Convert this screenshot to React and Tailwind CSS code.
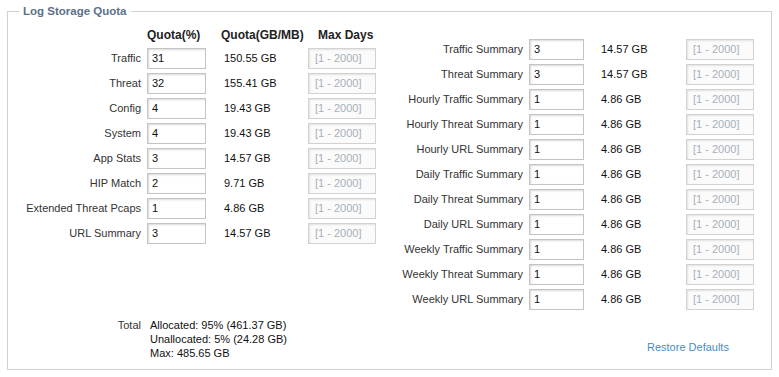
import React from 'react'

const left = [
  { label: 'Traffic', pct: '31', size: '150.55 GB' },
  { label: 'Threat', pct: '32', size: '155.41 GB' },
  { label: 'Config', pct: '4', size: '19.43 GB' },
  { label: 'System', pct: '4', size: '19.43 GB' },
  { label: 'App Stats', pct: '3', size: '14.57 GB' },
  { label: 'HIP Match', pct: '2', size: '9.71 GB' },
  { label: 'Extended Threat Pcaps', pct: '1', size: '4.86 GB' },
  { label: 'URL Summary', pct: '3', size: '14.57 GB' },
]

const right = [
  { label: 'Traffic Summary', pct: '3', size: '14.57 GB' },
  { label: 'Threat Summary', pct: '3', size: '14.57 GB' },
  { label: 'Hourly Traffic Summary', pct: '1', size: '4.86 GB' },
  { label: 'Hourly Threat Summary', pct: '1', size: '4.86 GB' },
  { label: 'Hourly URL Summary', pct: '1', size: '4.86 GB' },
  { label: 'Daily Traffic Summary', pct: '1', size: '4.86 GB' },
  { label: 'Daily Threat Summary', pct: '1', size: '4.86 GB' },
  { label: 'Daily URL Summary', pct: '1', size: '4.86 GB' },
  { label: 'Weekly Traffic Summary', pct: '1', size: '4.86 GB' },
  { label: 'Weekly Threat Summary', pct: '1', size: '4.86 GB' },
  { label: 'Weekly URL Summary', pct: '1', size: '4.86 GB' },
]

const Box = ({ value, w }) => (
  <div
    className={`${w} h-[21px] border border-[#c4c4c4] bg-white shadow-[inset_1px_1px_2px_rgba(0,0,0,0.15)] pl-[4px] flex items-center text-[#111]`}
  >
    {value}
  </div>
)

const Days = () => (
  <div className="w-[68px] h-[21px] border border-[#d2d2d2] bg-[#fbfbfb] shadow-[inset_1px_1px_2px_rgba(0,0,0,0.1)] pl-[6px] flex items-center text-[#a6b0ba]">
    [1 - 2000]
  </div>
)

export default function App() {
  return (
    <div className="w-[779px] h-[377px] bg-white text-[11px] text-[#333] font-['Liberation_Sans',Arial,sans-serif]">
      <fieldset className="ml-[7px] mt-[4px] w-[765px] h-[366px] border border-[#d0d0d0] px-0 pb-0">
        <legend className="ml-[11px] px-[4px] text-[11.5px] font-bold text-[#5b7188] leading-[15px]">
          Log Storage Quota
        </legend>

        <div className="flex">
          {/* left column */}
          <div className="w-[375px]">
            <div className="flex h-[15px] mt-[9px] font-bold text-[12px] text-[#222] leading-[15px] whitespace-nowrap">
              <div className="w-[139px]" />
              <div className="w-[62px]">Quota(%)</div>
              <div className="w-[95px] pl-[12px]">Quota(GB/MB)</div>
              <div className="w-[74px] pl-[14px]">Max Days</div>
            </div>
            <div className="flex flex-col gap-[4px] mt-[5px]">
              {left.map((r) => (
                <div key={r.label} className="flex items-center">
                  <div className="w-[139px] text-right pr-[6px] whitespace-nowrap">{r.label}</div>
                  <Box value={r.pct} w="w-[59px]" />
                  <div className="w-[102px] pl-[18px] text-[#111]">{r.size}</div>
                  <Days />
                </div>
              ))}
            </div>
            <div className="flex mt-[74px] leading-[14px]">
              <div className="w-[139px] text-right pr-[6px]">Total</div>
              <div className="pl-[3px] text-[#111]">
                <div>Allocated: 95% (461.37 GB)</div>
                <div>Unallocated: 5% (24.28 GB)</div>
                <div>Max: 485.65 GB</div>
              </div>
            </div>
          </div>

          {/* right column */}
          <div className="flex-1">
            <div className="flex flex-col gap-[4px] mt-[20px]">
              {right.map((r) => (
                <div key={r.label} className="flex items-center">
                  <div className="w-[146px] text-right pr-[6px] whitespace-nowrap">{r.label}</div>
                  <Box value={r.pct} w="w-[55px]" />
                  <div className="w-[102px] pl-[17px] text-[#111]">{r.size}</div>
                  <Days />
                </div>
              ))}
            </div>
            <div className="mt-[29px] pl-[264px] text-[#4a8cc4]">Restore Defaults</div>
          </div>
        </div>
      </fieldset>
    </div>
  )
}
